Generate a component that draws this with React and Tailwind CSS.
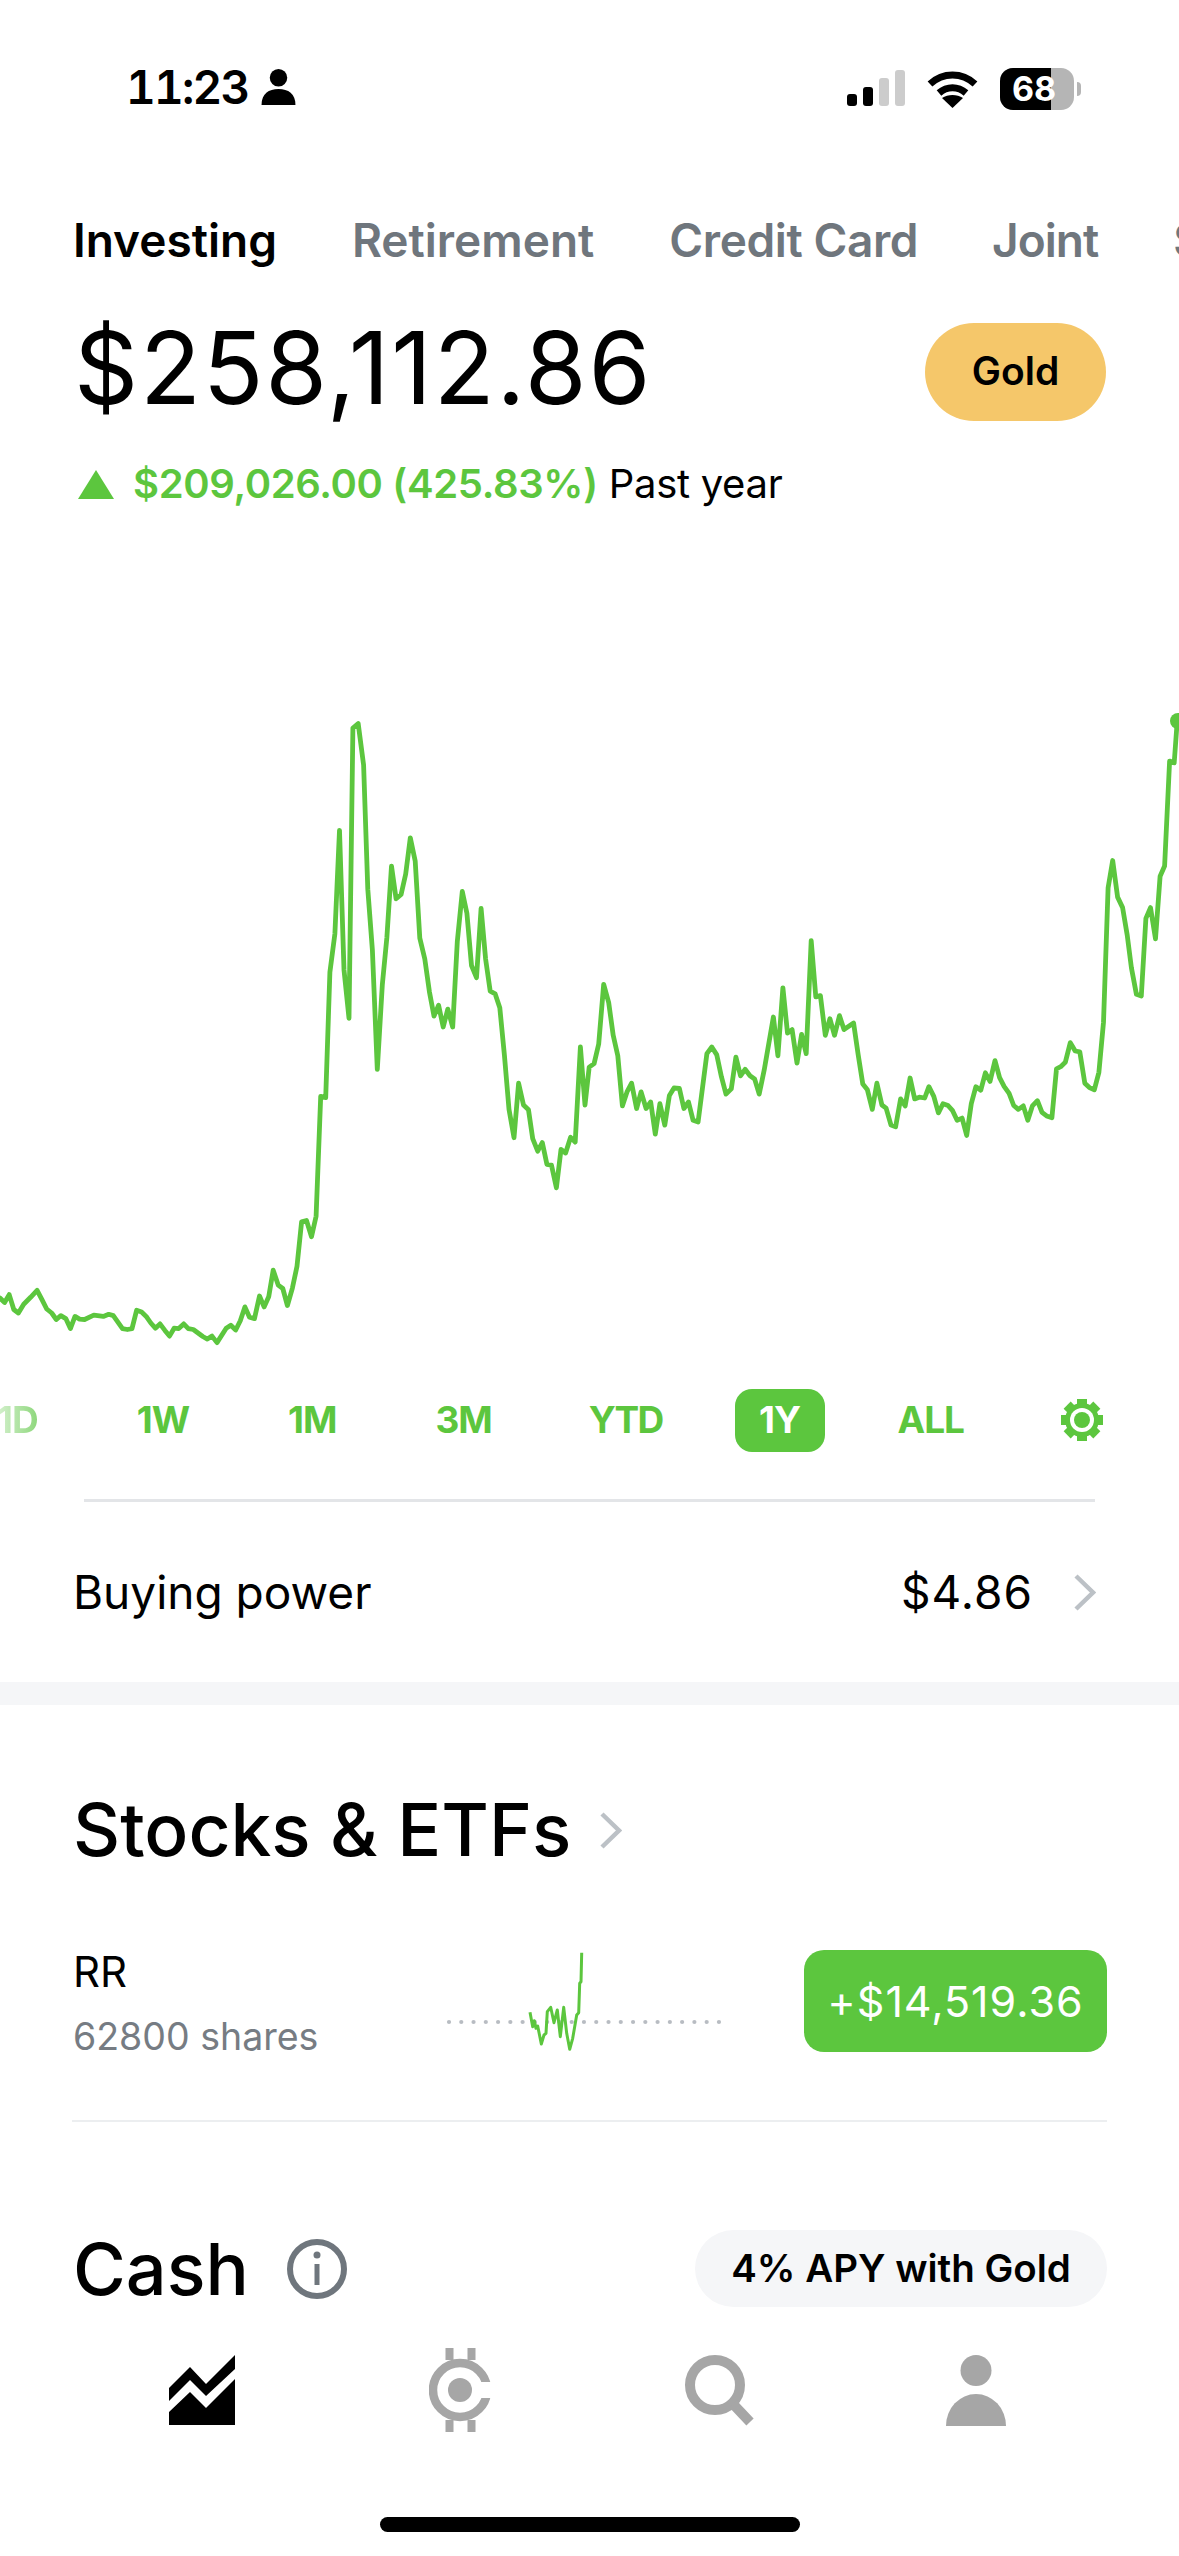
const G = "#5cc63e";

const z2 = "0,1418 12,1428 24,1410 36,1444 48,1452 62,1432 80,1416 97,1400 110,1422 122,1443 135,1452 147,1467 159,1458 172,1465 184,1488 196,1460 208,1466 221,1467 245,1457 270,1460 284,1455 296,1458 320,1488 333,1490 345,1488 357,1446 370,1450 382,1460 394,1475 406,1487 418,1477 431,1492 443,1505 455,1487 467,1488 480,1477 492,1488 505,1490 530,1506 542,1512 554,1505 567,1520 591,1487 603,1480 616,1491 628,1470 640,1438 652,1462 665,1465 678,1413 690,1438 702,1415 714,1354 727,1388 739,1396 751,1435 764,1395 776,1345 788,1243 801,1240 814,1277 826,1230 838,955 851,958 862,670 875,582 887,345 899,665 912,776 922,110 936,100 950,195 961,480 973,620 986,893 999,700 1011,590 1023,427 1035,502 1048,492 1060,445 1072,362 1085,415 1097,592 1110,640 1122,715 1134,771 1146,746 1158,796 1170,755 1183,796 1195,600 1208,485 1220,535 1232,655 1245,683 1257,524 1269,640 1281,714 1294,720 1306,752 1318,860 1330,985 1343,1050 1355,925 1368,975 1381,986 1392,1052 1405,1081 1417,1061 1429,1111 1441,1113 1454,1165 1466,1077 1478,1085 1491,1049 1503,1060";
const z3 = "1,842 13,975 24,888 37,880 49,835 62,698 75,740 87,815 99,862 111,977 123,945 135,925 148,983 160,945 173,983 185,968 197,1042 209,972 222,1021 234,953 246,936 260,937 272,983 284,968 296,1010 309,1014 332,857 345,842 358,860 370,910 382,950 396,938 408,865 420,908 432,893 445,908 457,915 469,950 482,895 506,773 518,862 531,706 543,810 555,802 568,879 580,813 592,857 605,598 617,727 629,724 642,815 654,777 666,815 679,770 691,802 716,787 728,860 740,927 752,940 765,985 777,925 790,975 801,982 814,1021 826,1025 839,961 851,977 864,913 876,961 888,957 902,959 913,933 926,955 938,993 950,972 963,976 975,988 987,1010 1000,1005 1012,1045 1024,972 1036,933 1049,941 1061,901 1073,921 1086,873 1098,912 1110,932 1123,948 1135,976 1147,985 1160,977 1172,1010 1184,977 1197,965 1209,992 1221,1000 1235,1004 1247,892 1258,887 1270,877 1283,832 1296,851 1308,853 1321,925 1333,935 1346,940 1358,900 1370,785 1382,477 1394,414 1407,498 1420,522 1432,585 1443,660 1456,721 1469,725 1481,547 1493,522 1506,594 1518,450 1530,427 1543,186 1555,190 1563,95";

const conv = (s, ox, sx) =>
  s.split(" ").map((p) => {
    const [x, y] = p.split(",").map(Number);
    return `${(ox + x / sx).toFixed(1)},${(680 + y / 2.294).toFixed(1)}`;
  });
const chartPoints = [...conv(z2, 0, 2.613), ...conv(z3, 580, 2.617)].join(" ");

const spark = "330,247 338,290 343,272 348,295 353,288 358,312 364,342 372,315 378,310 382,245 392,232 402,278 412,240 421,320 431,232 440,310 449,358 458,325 470,255 476,248 479,160 483,155 485,68"
  .split(" ")
  .map((p) => {
    const [x, y] = p.split(",").map(Number);
    return `${(x / 3).toFixed(1)},${(y / 3).toFixed(1)}`;
  })
  .join(" ");

const Chevron = ({ className }) => (
  <svg viewBox="0 0 23 37" className={className} fill="none" stroke="#bcc1c6" strokeWidth="4.5">
    <path d="M3 2 L20 18.5 L3 35" />
  </svg>
);

const Gear = () => (
  <svg viewBox="0 0 44 44" className="w-[44px] h-[44px]" fill={G}>
    {[0, 45, 90, 135, 180, 225, 270, 315].map((a) => (
      <rect key={a} x="17" y="1" width="10" height="9" transform={`rotate(${a} 22 22)`} />
    ))}
    <circle cx="22" cy="22" r="17" />
    <circle cx="22" cy="22" r="12" fill="#fff" />
    <circle cx="22" cy="22" r="8" />
  </svg>
);

function StatusBar() {
  return (
    <div className="h-[176px] pt-[64px] pl-[126px] pr-[98px] flex items-start justify-between">
      <div className="flex items-center gap-[13px] h-[46px]">
        <span className="text-[46px] leading-[46px] font-semibold tabular-nums tracking-[-1.8px] text-black">11:23</span>
        <svg viewBox="0 0 33 35" className="w-[35px] h-[36px]" fill="#000">
          <circle cx="16.5" cy="8.5" r="8.5" />
          <path d="M0 35 C0 24 7 19.5 16.5 19.5 C26 19.5 33 24 33 35 Z" />
        </svg>
      </div>
      <div className="flex items-start gap-[22px] pt-[4px]">
        <div className="flex items-end gap-[6px] h-[36px] mt-[2px]">
          <div className="w-[10px] h-[12px] rounded-[3px] bg-black" />
          <div className="w-[10px] h-[19px] rounded-[3px] bg-black" />
          <div className="w-[10px] h-[28px] rounded-[3px] bg-[#cccccc]" />
          <div className="w-[10px] h-[36px] rounded-[3px] bg-[#cccccc]" />
        </div>
        <svg viewBox="0 0 51 38" className="w-[51px] h-[38px] mt-[2px]" fill="none" stroke="#000" strokeWidth="7">
          <path d="M3 14 C16 2 35 2 48 14" />
          <path d="M12 23 C20 16 31 16 39 23" />
          <path d="M25.5 38 L15 28 C21 24 30 24 36 28 Z" fill="#000" stroke="none" />
        </svg>
        <div className="flex items-center gap-[3px]">
          <div className="relative w-[74px] h-[42px] rounded-[13px] overflow-hidden bg-[#b5b5b5]">
            <div className="h-full w-[51px] bg-black" />
            <span className="absolute inset-0 flex items-center justify-center pr-[6px] text-[34px] leading-none font-bold text-white">68</span>
          </div>
          <div className="w-[4px] h-[14px] rounded-r-[4px] bg-[#b5b5b5]" />
        </div>
      </div>
    </div>
  );
}

function NavIcons() {
  return (
    <div className="h-[100px] mt-[33px] relative">
      <div className="flex items-center h-full">
        <svg viewBox="0 0 66 70" className="w-[66px] h-[70px] ml-[169px]" fill="#000">
          <path d="M0 33 L21 12 L37 29 L66 0 L66 14 L37 41 L21 25 L0 46 Z" />
          <path d="M0 57 L21 37 L37 53 L66 24 L66 70 L0 70 Z" />
        </svg>
        <svg viewBox="0 0 62 84" className="w-[62px] h-[84px] ml-[194px]" fill="none" stroke="#a6a6a6">
          <path d="M20.5 0 V12 M42.5 0 V12 M20.5 72 V84 M42.5 72 V84" strokeWidth="8" />
          <circle cx="31" cy="42" r="27" strokeWidth="8.5" />
          <rect x="46" y="34" width="16" height="16" fill="#fff" stroke="none" />
          <circle cx="31" cy="42" r="12" fill="#a6a6a6" stroke="none" />
        </svg>
        <svg viewBox="0 0 70 72" className="w-[70px] h-[72px] ml-[193px]" fill="none" stroke="#a6a6a6" strokeWidth="10">
          <circle cx="31" cy="31" r="25" />
          <path d="M49 50 L66 68" strokeWidth="10" />
        </svg>
        <svg viewBox="0 0 60 71" className="w-[60px] h-[71px] ml-[192px]" fill="#a6a6a6">
          <circle cx="30" cy="15.5" r="15.5" />
          <path d="M0 71 A30 32 0 0 1 60 71 Z" />
        </svg>
      </div>
    </div>
  );
}

export default function App() {
  return (
    <div className="w-[1179px] h-[2556px] bg-white overflow-hidden [font-family:Inter,sans-serif] text-black flex flex-col">
      <StatusBar />

      <div className="h-[128px] flex items-center pl-[73px] gap-[75px] whitespace-nowrap text-[46px] font-semibold text-[#6f767d]">
        <span className="text-black">Investing</span>
        <span>Retirement</span>
        <span className="tracking-[-0.4px]">Credit Card</span>
        <span className="tracking-[-1px] -ml-[1px]">Joint</span>
        <span>Spending</span>
      </div>

      <div className="h-[136px] flex items-center justify-between pl-[74px] pr-[73px]">
        <span className="text-[100px] leading-none -mt-[8px] tracking-[1.8px]">$258,112.86</span>
        <div className="w-[181px] h-[98px] -mt-[1px] rounded-[49px] bg-[#f5c76a] flex items-center justify-center text-[39px] font-semibold">
          Gold
        </div>
      </div>

      <div className="h-[88px] flex items-center pl-[78px] text-[40px] whitespace-nowrap">
        <svg viewBox="0 0 36 29" className="w-[36px] h-[29px] mr-[19px]" fill={G}>
          <path d="M18 0 L36 29 H0 Z" />
        </svg>
        <span className="font-semibold text-[#5cc63e] tracking-[-0.35px]">$209,026.00 (425.83%)</span>
        <span className="ml-[11px] tracking-[-0.3px]">Past year</span>
      </div>

      <svg viewBox="0 528 1179 842" className="block w-[1179px] h-[842px] shrink-0">
        <polyline points={chartPoints} fill="none" stroke={G} strokeWidth="4.8" strokeLinejoin="round" strokeLinecap="round" />
        <circle cx="1178" cy="721" r="8" fill={G} />
      </svg>

      <div className="h-[100px] flex items-center -ml-[28px] gap-[49px] text-[37px] font-bold tracking-[-1px] text-[#5cc63e] whitespace-nowrap">
        <span className="px-[25px] bg-gradient-to-r from-white to-[#5cc63e] bg-clip-text text-transparent">1D</span>
        <span className="px-[25px]">1W</span>
        <span className="px-[25px]">1M</span>
        <span className="px-[25px]">3M</span>
        <span className="px-[25px] -ml-[2px] tracking-[-1.7px]">YTD</span>
        <span className="w-[90px] -ml-[2px] -mr-[1px] h-[63px] rounded-[17px] bg-[#5cc63e] text-white flex items-center justify-center">1Y</span>
        <span className="px-[25px]">ALL</span>
        <span className="px-[25px] -ml-[3px] flex items-center"><Gear /></span>
      </div>

      <div className="h-[3px] mt-[29px] ml-[84px] mr-[84px] bg-[#e3e5e8] shrink-0" />

      <div className="h-[180px] flex items-center justify-between pl-[73px] pr-[83px] text-[46px] shrink-0">
        <span>Buying power</span>
        <div className="flex items-center gap-[40px]">
          <span className="tracking-[1px]">$4.86</span>
          <Chevron className="w-[23px] h-[37px]" />
        </div>
      </div>

      <div className="h-[23px] bg-[#f5f6f8] shrink-0" />

      <div className="h-[245px] pt-[5px] flex items-center pl-[73px] gap-[28px] shrink-0">
        <span className="text-[73px] font-medium">Stocks &amp; ETFs</span>
        <Chevron className="w-[23px] h-[37px]" />
      </div>

      <div className="h-[102px] flex items-start pl-[73px] pr-[72px] shrink-0">
        <div className="w-[347px] shrink-0 flex flex-col">
          <span className="text-[42px] leading-[44px]">RR</span>
          <span className="text-[37.5px] leading-[48px] mt-[19px] text-[#767c83]">62800 shares</span>
        </div>
        <svg viewBox="0 0 320 140" className="w-[320px] h-[140px] shrink-0 -my-[20px]" fill="none">
          {Array.from({ length: 23 }, (_, i) => (
            <circle key={i} cx={29 + i * 12.27} cy="92" r="2.1" fill="#b8bcc2" />
          ))}
          <polyline points={spark} stroke={G} strokeWidth="3" strokeLinejoin="round" />
        </svg>
        <div className="ml-auto w-[303px] h-[102px] rounded-[20px] bg-[#5cc63e] flex items-center justify-center text-[43px] tracking-[1px] text-white">
          +$14,519.36
        </div>
      </div>

      <div className="h-[2px] mt-[68px] ml-[72px] mr-[72px] bg-[#eceef0] shrink-0" />

      <div className="mt-[108px] h-[77px] flex items-center justify-between pl-[73px] pr-[72px] shrink-0">
        <div className="flex items-center gap-[38px]">
          <span className="text-[72px] font-medium">Cash</span>
          <svg viewBox="0 0 60 60" className="w-[60px] h-[60px]" fill="none" stroke="#6f767d" strokeWidth="6">
            <circle cx="30" cy="30" r="27" />
            <path d="M30 25 V46" strokeWidth="5" />
            <circle cx="30" cy="16" r="3.5" fill="#6f767d" stroke="none" />
          </svg>
        </div>
        <div className="w-[412px] h-[77px] rounded-[39px] bg-[#f5f6f8] flex items-center justify-center text-[38.5px] font-semibold whitespace-nowrap">
          4% APY with Gold
        </div>
      </div>

      <NavIcons />

      <div className="w-[420px] h-[15px] mt-[77px] ml-[380px] rounded-full bg-black shrink-0" />
    </div>
  );
}
